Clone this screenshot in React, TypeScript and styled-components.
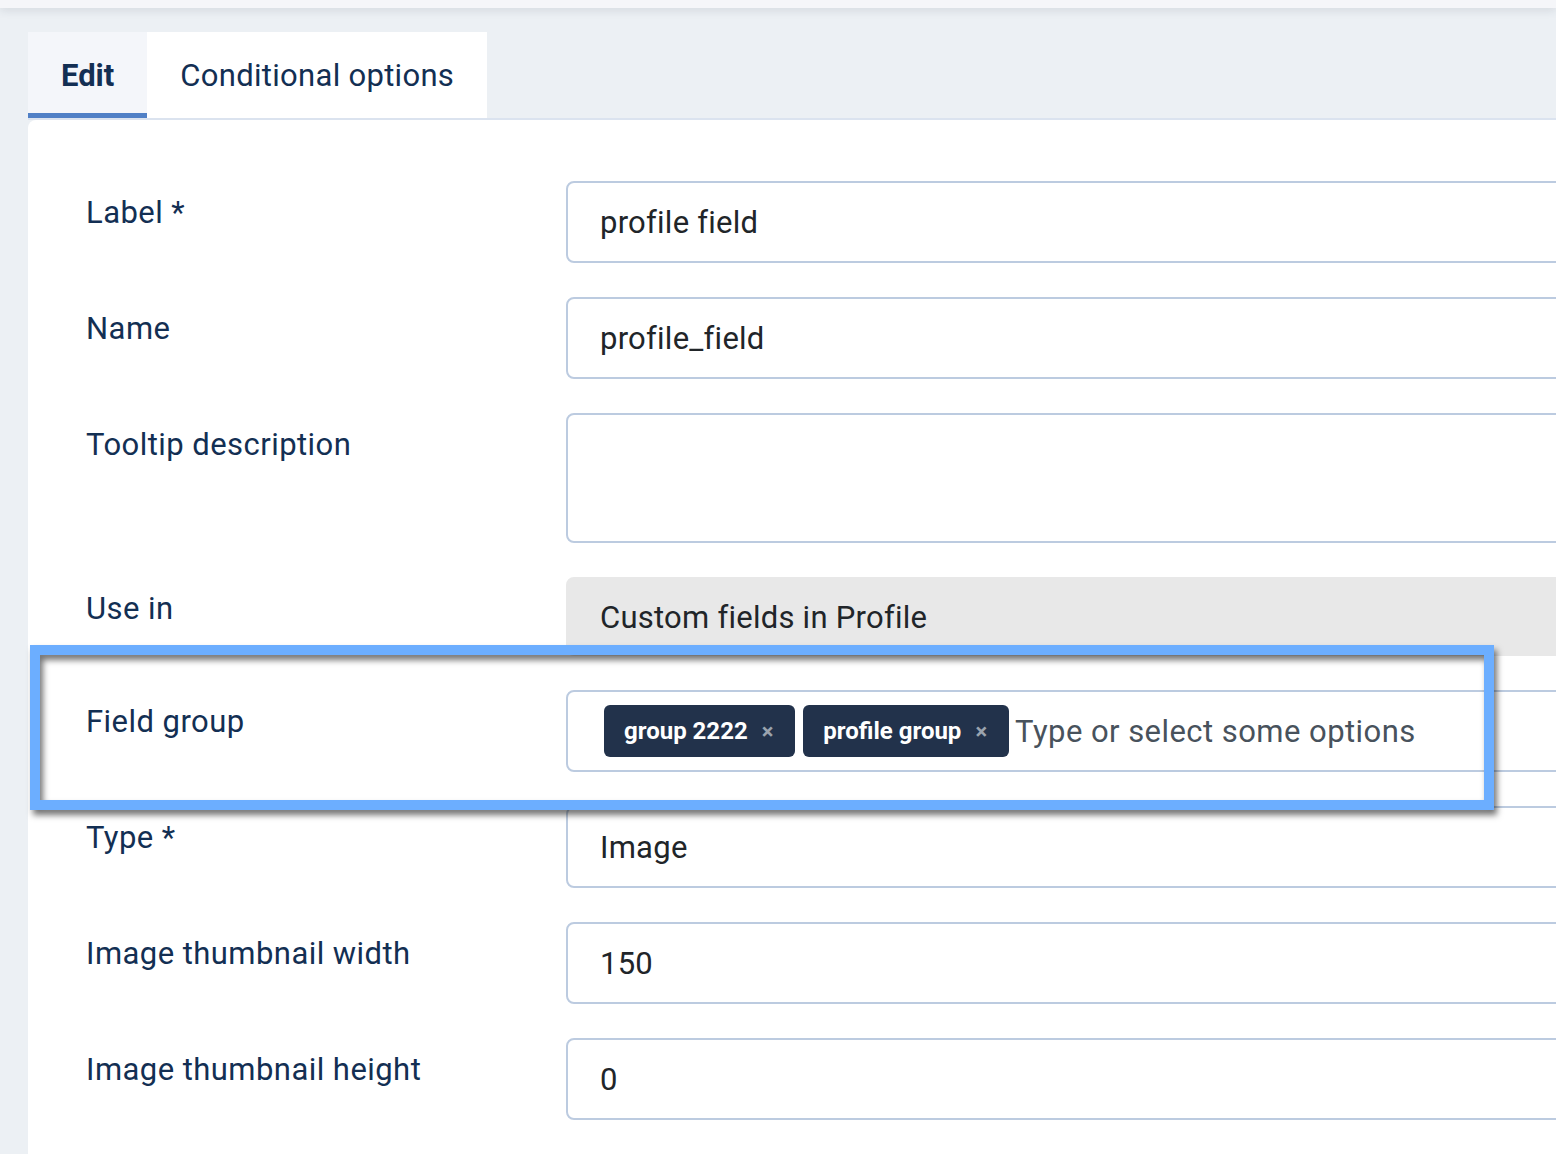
import React from 'react';
import styled, { createGlobalStyle } from 'styled-components';

const GlobalStyle = createGlobalStyle`
  html, body {
    margin: 0;
    padding: 0;
    height: 1154px;
    overflow: hidden;
    background: #ecf0f4;
    font-family: Roboto, "Liberation Sans", sans-serif;
  }
`;

const TopBar = styled.div`
  height: 8px;
  background: #f5f6f9;
  box-shadow: 0 2px 10px rgba(40, 60, 80, 0.14);
  position: relative;
  z-index: 1;
`;

const Content = styled.div`
  padding: 24px 0 0 28px;
`;

const TabList = styled.div`
  display: flex;
  border-bottom: 2px solid #dbe3ef;
`;

const Tab = styled.div<{ $active?: boolean }>`
  box-sizing: border-box;
  height: 86px;
  padding: 6px 33px 0;
  display: flex;
  align-items: center;
  font-size: 31px;
  letter-spacing: ${(p) => (p.$active ? '0' : '0.3px')};
  color: #132f53;
  font-weight: ${(p) => (p.$active ? 700 : 400)};
  background: ${(p) => (p.$active ? '#f4f6fa' : '#ffffff')};
  border-bottom: 5px solid ${(p) => (p.$active ? '#5080c6' : '#ffffff')};
`;

const Panel = styled.div`
  background: #ffffff;
  border-radius: 8px 0 0 0;
  margin-right: -60px;
  padding: 61px 0 0 58px;
  display: flex;
  flex-direction: column;
  gap: 34px;
  min-height: 1100px;
`;

const Row = styled.div<{ $marked?: boolean }>`
  display: grid;
  grid-template-columns: 480px 1fr;
  position: ${(p) => (p.$marked ? 'relative' : 'static')};
`;

const Label = styled.div`
  font-size: 31px;
  letter-spacing: 0.45px;
  line-height: 45px;
  padding-top: 9px;
  color: #132f53;
`;

const Field = styled.div<{ $tall?: boolean; $readonly?: boolean }>`
  box-sizing: border-box;
  height: ${(p) => (p.$tall ? '130px' : p.$readonly ? '79px' : '82px')};
  border: 2px solid ${(p) => (p.$readonly ? '#e8e8e8' : '#bccbe0')};
  background: ${(p) => (p.$readonly ? '#e8e8e8' : '#ffffff')};
  border-radius: 8px;
  padding: 1px 32px 0;
  display: flex;
  align-items: center;
  font-size: 31px;
  letter-spacing: 0.25px;
  color: #212529;
`;

const ChoiceField = styled(Field)`
  padding: 0 0 0 36px;
  gap: 8px;
`;

const Chip = styled.span`
  display: inline-flex;
  align-items: center;
  height: 52px;
  padding: 0 22px 0 20px;
  gap: 14px;
  background: #22324b;
  border-radius: 6px;
  color: #ffffff;
  font-size: 24px;
  letter-spacing: 0;
  font-weight: 700;
`;

const ChipClose = styled.span`
  color: #9aa3ae;
  font-size: 22px;
  font-weight: 700;
`;

const Placeholder = styled.span`
  color: #48525c;
  letter-spacing: 0.45px;
  margin-left: -2px;
`;

const Highlight = styled.div`
  position: absolute;
  top: -45px;
  left: -56px;
  width: 1464px;
  height: 165px;
  box-sizing: border-box;
  border: 10px solid #6caeff;
  filter: drop-shadow(3px 5px 3px rgba(0, 0, 0, 0.55));
  pointer-events: none;
`;

const rows = [
  { label: 'Label *', value: 'profile field' },
  { label: 'Name', value: 'profile_field' },
  { label: 'Tooltip description', value: '', tall: true },
  { label: 'Use in', value: 'Custom fields in Profile', readonly: true },
];

const rest = [
  { label: 'Type *', value: 'Image' },
  { label: 'Image thumbnail width', value: '150' },
  { label: 'Image thumbnail height', value: '0' },
  { label: '', value: '' },
];

const App = () => {
  return (
    <>
      <GlobalStyle />
      <TopBar />
      <Content>
        <TabList>
          <Tab $active>Edit</Tab>
          <Tab>Conditional options</Tab>
        </TabList>
        <Panel>
          {rows.map((r) => (
            <Row key={r.label}>
              <Label>{r.label}</Label>
              <Field $tall={r.tall} $readonly={r.readonly}>
                {r.value}
              </Field>
            </Row>
          ))}
          <Row $marked>
            <Label>Field group</Label>
            <ChoiceField>
              <Chip>
                group 2222 <ChipClose>×</ChipClose>
              </Chip>
              <Chip>
                profile group <ChipClose>×</ChipClose>
              </Chip>
              <Placeholder>Type or select some options</Placeholder>
            </ChoiceField>
            <Highlight />
          </Row>
          {rest.map((r, i) => (
            <Row key={i}>
              <Label>{r.label}</Label>
              <Field>{r.value}</Field>
            </Row>
          ))}
        </Panel>
      </Content>
    </>
  );
};

export default App;
